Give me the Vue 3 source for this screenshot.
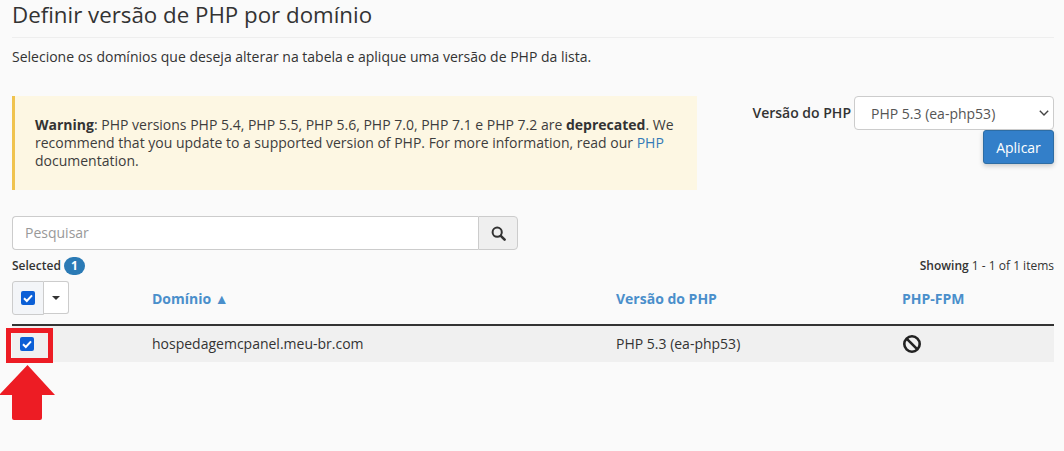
<script setup>
const columns = ['Versão do PHP', 'PHP-FPM']
</script>

<template>
  <div class="page">
    <h1 class="title">Definir versão de PHP por domínio</h1>
    <p class="lead">Selecione os domínios que deseja alterar na tabela e aplique uma versão de PHP da lista.</p>

    <div class="top">
      <div class="alert">
        <b>Warning</b>: PHP versions PHP 5.4, PHP 5.5, PHP 5.6, PHP 7.0, PHP 7.1 e PHP 7.2 are <b>deprecated</b>. We recommend that you update to a supported version of PHP. For more information, read our <a class="link">PHP</a> documentation.
      </div>
      <div class="version">
        <div class="version-row">
          <label class="version-label">Versão do PHP</label>
          <div class="select-wrap">
            <select class="select"><option>PHP 5.3 (ea-php53)</option></select>
            <svg class="chevron" width="10" height="6" viewBox="0 0 10 6" fill="none" stroke="#444" stroke-width="1.4">
              <path d="M0.8 0.8 L5 5 L9.2 0.8" />
            </svg>
          </div>
        </div>
        <button class="apply">Aplicar</button>
      </div>
    </div>

    <div class="search">
      <div class="search-input">Pesquisar</div>
      <div class="search-btn">
        <svg width="15" height="15" viewBox="0 0 15 15" fill="none" stroke="#333" stroke-width="2">
          <circle cx="6.2" cy="6.2" r="4.6" />
          <path d="M9.8 9.8 L13.6 13.6" stroke-width="2.6" stroke-linecap="round" />
        </svg>
      </div>
    </div>

    <div class="meta">
      <div class="selected">Selected <span class="badge">1</span></div>
      <div class="showing"><span class="showing-strong">Showing</span> 1 - 1 of 1 items</div>
    </div>

    <div class="grid head">
      <div class="check-group">
        <div class="check-cell">
          <svg class="check" viewBox="0 0 14 14"><rect width="14" height="14" rx="2" fill="#0b5fd6" /><path d="M3 7.3 L5.8 10 L11 4.3" fill="none" stroke="#fff" stroke-width="2" /></svg>
        </div>
        <div class="caret-cell"><span class="caret"></span></div>
      </div>
      <div class="th">Domínio ▲</div>
      <div class="th">{{ columns[0] }}</div>
      <div class="th">{{ columns[1] }}</div>
    </div>

    <div class="grid row">
      <div class="row-check">
        <svg class="check" viewBox="0 0 14 14"><rect width="14" height="14" rx="2" fill="#0b5fd6" /><path d="M3 7.3 L5.8 10 L11 4.3" fill="none" stroke="#fff" stroke-width="2" /></svg>
      </div>
      <div>hospedagemcpanel.meu-br.com</div>
      <div>PHP 5.3 (ea-php53)</div>
      <div class="ban-cell">
        <svg width="20" height="20" viewBox="0 0 20 20" fill="none" stroke="#222" stroke-width="2.6">
          <circle cx="10" cy="10" r="7.7" />
          <path d="M4.6 4.6 L15.4 15.4" />
        </svg>
      </div>
    </div>

    <div class="highlight"></div>
    <svg class="arrow" width="56" height="56" viewBox="0 0 56 56">
      <path d="M27.5 0 L55 30 L42 30 L42 53 Q42 55 40 55 L14 55 Q12 55 12 53 L12 30 L-1 30 Z" fill="#ed1c24" />
    </svg>
  </div>
</template>

<style>
html, body { margin: 0; background: #fafafa; }
</style>

<style scoped>
.page {
  position: relative;
  width: 1064px;
  height: 451px;
  overflow: hidden;
  box-sizing: border-box;
  padding: 0 10px 0 12px;
  font-family: "Open Sans", sans-serif;
  font-size: 14px;
  line-height: 20px;
  color: #333;
  background: #fafafa;
}
.title {
  margin: 0;
  height: 37px;
  font-size: 22.3px;
  line-height: 29px;
  font-weight: 400;
  color: #333;
  border-bottom: 1px solid #eee;
}
.lead {
  margin: 9px 0 0;
  height: 40px;
}
.top {
  display: flex;
  justify-content: space-between;
  padding-top: 9px;
  height: 129px;
  box-sizing: border-box;
}
.alert {
  width: 685px;
  height: 94px;
  box-sizing: border-box;
  border-left: 3px solid #f0c34e;
  background: #fdf7e3;
  padding: 20px 20px 0 20px;
  line-height: 18px;
  color: #3d3d3d;
}
.alert b { font-weight: 700; color: #333; }
.link { color: #337ab7; }
.version {
  display: flex;
  flex-direction: column;
  align-items: flex-end;
}
.version-row { display: flex; align-items: center; }
.version-label { font-weight: 600; margin-right: 3px; margin-top: -1px; }
.select-wrap { position: relative; width: 200px; height: 34px; }
.select {
  appearance: none;
  display: block;
  width: 200px;
  height: 34px;
  padding: 0 16px;
  font-family: "Open Sans", sans-serif;
  font-size: 14px;
  color: #555;
  background: #fff;
  border: 1px solid #ccc;
  border-radius: 4px;
}
.chevron { position: absolute; right: 5px; top: 14px; }
.apply {
  width: 71px;
  height: 34px;
  padding: 0;
  border: 1px solid #2e6da4;
  border-radius: 3px;
  background: #337fc9;
  color: #fff;
  font-family: "Open Sans", sans-serif;
  font-size: 14px;
  box-shadow: 0 2px 5px rgba(0, 0, 0, 0.2);
}
.search {
  display: flex;
  width: 506px;
  height: 34px;
}
.search-input {
  flex: 1;
  box-sizing: border-box;
  padding: 6px 12px;
  background: #fff;
  border: 1px solid #ccc;
  border-right: none;
  border-radius: 4px 0 0 4px;
  color: #999;
}
.search-btn {
  width: 40px;
  box-sizing: border-box;
  display: flex;
  align-items: center;
  justify-content: center;
  background: #efefef;
  border: 1px solid #ccc;
  border-radius: 0 4px 4px 0;
}
.meta {
  display: flex;
  justify-content: space-between;
  align-items: center;
  height: 31px;
  font-size: 12px;
}
.selected { display: flex; align-items: center; gap: 3px; font-weight: 600; color: #333; }
.badge {
  width: 21px;
  height: 18px;
  border-radius: 9px;
  background: #2a7ab5;
  color: #fff;
  font-weight: 700;
  text-align: center;
  line-height: 18px;
}
.showing-strong { font-weight: 600; }
.grid {
  display: grid;
  grid-template-columns: 140px 464px 286px 1fr;
  align-items: center;
}
.head { align-items: start; border-bottom: 2px solid #333; height: 45px; box-sizing: border-box; }
.check-group { display: flex; height: 34px; width: 57px; }
.check-cell {
  width: 32px;
  box-sizing: border-box;
  display: flex;
  align-items: center;
  justify-content: center;
  background: #f3f5f8;
  border: 1px solid #ccc;
  border-radius: 3px 0 0 3px;
}
.caret-cell {
  flex: 1;
  box-sizing: border-box;
  display: flex;
  align-items: center;
  justify-content: center;
  background: #fff;
  border: 1px solid #ccc;
  border-left: none;
  border-radius: 0 3px 3px 0;
  height: 33px;
}
.caret {
  width: 0;
  height: 0;
  border-left: 4px solid transparent;
  border-right: 4px solid transparent;
  border-top: 4px solid #333;
}
.check { width: 14px; height: 14px; display: block; }
.th {
  font-weight: 700;
  color: #4a8fcb;
  padding-top: 8px;
}
.row { height: 36px; background: #f0f0f0; }
.row-check { padding-left: 8px; }
.ban-cell { display: flex; }
.highlight {
  position: absolute;
  left: 6px;
  top: 328px;
  width: 47px;
  height: 35px;
  box-sizing: border-box;
  border: 5px solid #ed1c24;
}
.arrow { position: absolute; left: 0; top: 365px; }
</style>
